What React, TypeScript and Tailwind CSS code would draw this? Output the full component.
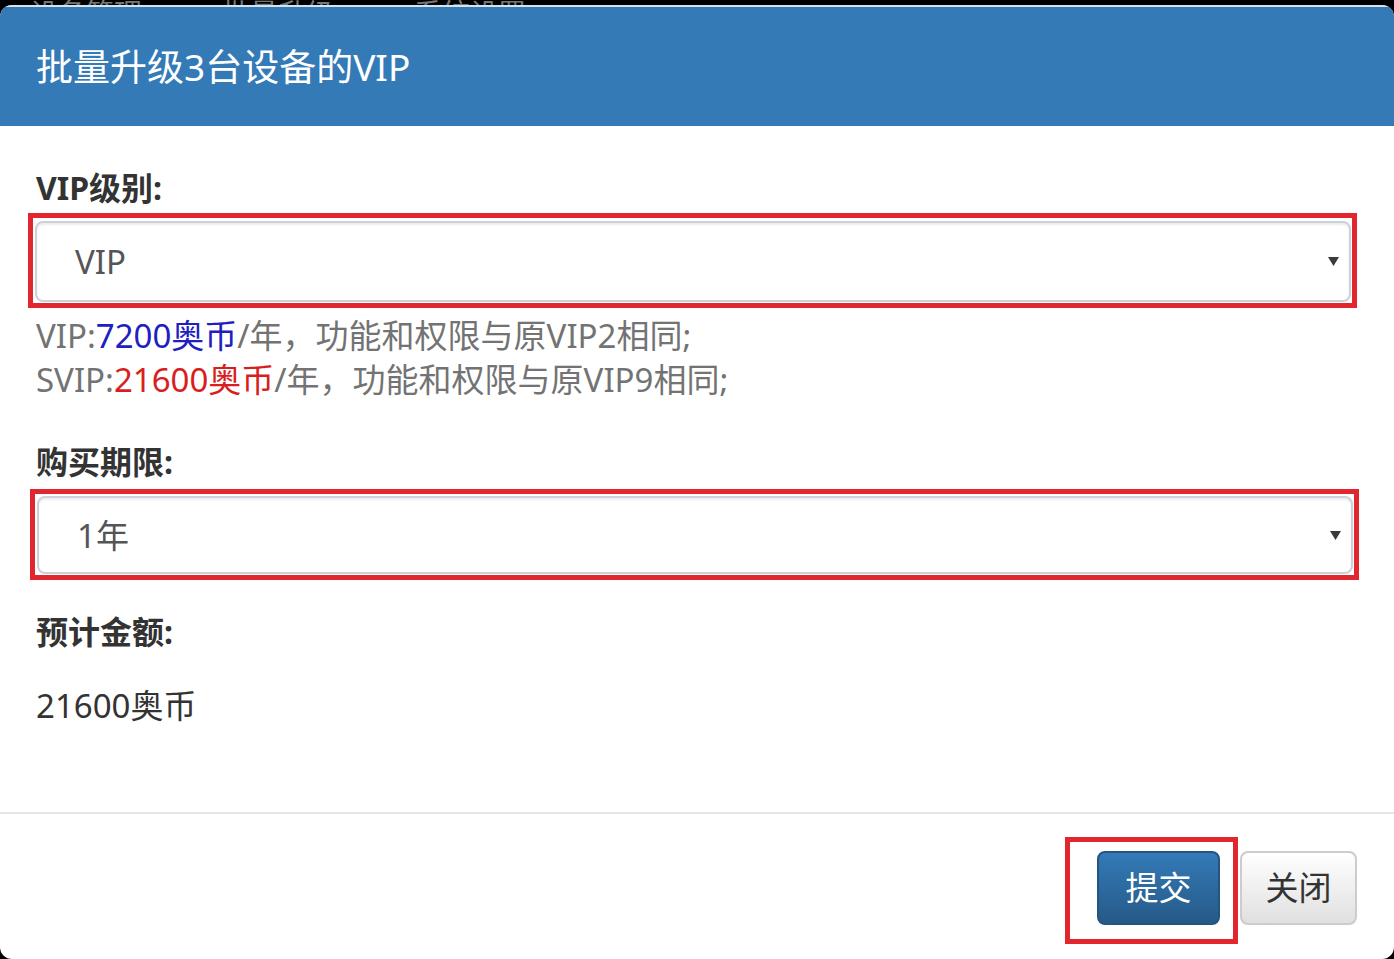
import React from "react";

const font = { fontFamily: '"Noto Sans","Noto Sans CJK SC",sans-serif' };

function Arrow() {
  return (
    <svg width="11" height="9" viewBox="0 0 11 9" className="shrink-0">
      <polygon points="0,0 11,0 5.5,9" fill="#3a3a3a" />
    </svg>
  );
}

function SelectBox({ value, h }: { value: string; h: string }) {
  return (
    <div
      className={`${h} flex items-center justify-between rounded-[8px] border-2 border-[#ccd0d8] bg-white pl-[38px] pr-[10px] shadow-[inset_0_2px_2px_rgba(0,0,0,0.08)]`}
    >
      <span className="text-[33px] leading-none text-[#555]">{value}</span>
      <Arrow />
    </div>
  );
}

export default function App() {
  return (
    <div className="flex h-[959px] w-[1394px] flex-col bg-black" style={font}>
      <div className="flex h-[5px] items-end gap-[80px] overflow-hidden pl-[30px]">
        <span className="translate-y-[22px] text-[28px] leading-[28px] text-[#777]">设备管理</span>
        <span className="translate-y-[22px] text-[28px] leading-[28px] text-[#777]">批量升级</span>
        <span className="translate-y-[22px] text-[28px] leading-[28px] text-[#777]">系统设置</span>
      </div>
      <div className="flex flex-1 flex-col overflow-hidden rounded-[12px] bg-white">
        <div className="flex h-[121px] items-center border-t-2 border-[#d3e3f1] bg-[#337ab7] pl-[36px]">
          <span className="text-[37px] leading-none text-white">批量升级3台设备的VIP</span>
        </div>
        <div className="flex flex-1 flex-col px-[36px] pt-[40px]">
          <div className="text-[32px] font-bold leading-[43px] text-[#333]">VIP级别:</div>
          <div className="-ml-[8px] mt-[4px] w-[1329px] border-[5px] border-[#e2262e] pb-[1px] pl-[2px] pr-[1px] pt-[3px]">
            <SelectBox value="VIP" h="h-[81px]" />
          </div>
          <div className="mt-[6px] text-[33px] leading-[44px] text-[#737373]">
            <div>
              VIP:<span className="text-[#2020c0]">7200奥币</span>/年，功能和权限与原VIP2相同;
            </div>
            <div>
              SVIP:<span className="text-[#d81e1e]">21600奥币</span>/年，功能和权限与原VIP9相同;
            </div>
          </div>
          <div className="mt-[38px] text-[32px] font-bold leading-[43px] text-[#333]">购买期限:</div>
          <div className="-ml-[6px] mt-[6px] w-[1329px] border-[5px] border-[#e2262e] pb-[1px] pl-[2px] pr-[1px] pt-[2px]">
            <SelectBox value="1年" h="h-[78px]" />
          </div>
          <div className="mt-[30px] text-[32px] font-bold leading-[43px] text-[#333]">预计金额:</div>
          <div className="mt-[31px] text-[33px] leading-[43px] text-[#333]">21600奥币</div>
        </div>
        <div className="flex h-[147px] justify-end gap-[20px] border-t-2 border-[#e5e5e5] pr-[37px] pt-[37px]">
          <div className="relative h-[74px]">
            <div className="pointer-events-none absolute -bottom-[19px] -left-[32px] -right-[18px] -top-[14px] border-[5px] border-[#e2262e]" />
            <button className="h-[74px] w-[123px] rounded-[8px] border-2 border-[#245580] bg-gradient-to-b from-[#337ab7] to-[#265a88] text-[33px] text-white">
              提交
            </button>
          </div>
          <button className="h-[74px] w-[117px] rounded-[8px] border-2 border-[#ccc] bg-gradient-to-b from-white to-[#e0e0e0] text-[33px] text-[#333]">
            关闭
          </button>
        </div>
      </div>
    </div>
  );
}
